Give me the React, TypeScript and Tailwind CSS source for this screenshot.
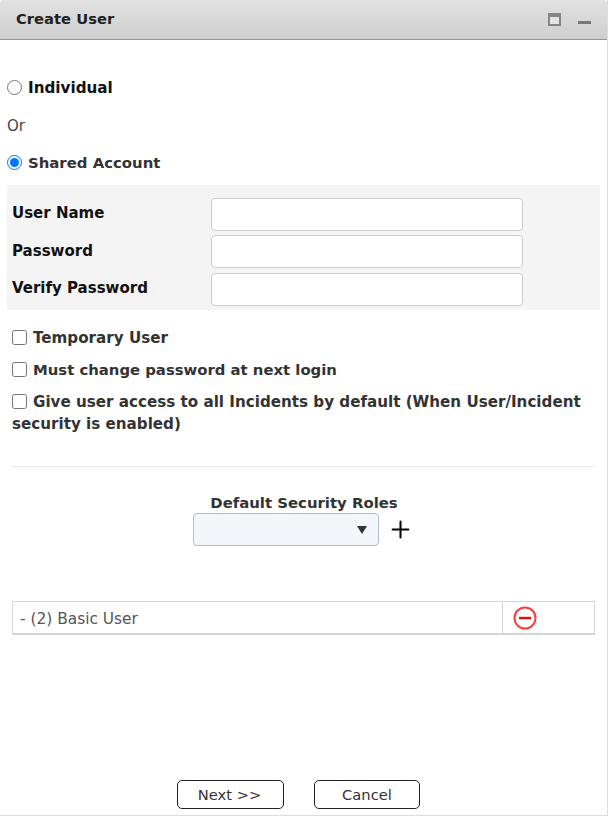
import { Plus } from "lucide-react";

const font = { fontFamily: '"DejaVu Sans", Verdana, sans-serif' };

function FieldRow({ label, className, labelClass }: { label: string; className: string; labelClass: string }) {
  return (
    <div className={`flex items-center h-[33px] ${className}`}>
      <label className={`w-[204px] pl-[5px] text-[15px] font-bold text-[#111] ${labelClass}`}>{label}</label>
      <input className="w-[312px] h-[33px] bg-white border border-[#ccc] rounded-[4px]" />
    </div>
  );
}

function CheckRow({ label, className }: { label: string; className: string }) {
  return (
    <div className={`pl-[12px] pr-[16px] leading-[22px] font-bold text-[#333] ${className}`}>
      <input type="checkbox" className="align-[-2px] mr-[6px] w-[15px] h-[15px]" />
      {label}
    </div>
  );
}

export default function App() {
  return (
    <div style={font} className="w-[608px] h-[816px] bg-white flex flex-col overflow-hidden border-r border-b border-[#ddd]">
      {/* Title bar */}
      <div className="h-[40px] shrink-0 flex items-center justify-between pl-[16px] pr-[16px] border-b border-[#8f979c] bg-gradient-to-b from-[#e2e2e2] to-[#cecece] rounded-t-[3px]">
        <span className="text-[14.75px] font-bold text-[#222]">Create User</span>
        <div className="flex items-center gap-[17px]">
          <div className="w-[13px] h-[13px] border-2 border-t-[4px] border-[#858585] bg-[#e4e4e4] -ml-px" />
          <div className="w-[13px] h-[3px] mt-[5px] bg-[#777]" />
        </div>
      </div>

      <div className="flex items-center h-[20px] mt-[37px] pl-[7px]">
        <input type="radio" name="type" className="w-[15px] h-[15px] m-0" />
        <span className="ml-[6px] pt-[2px] text-[15.2px] font-bold text-[#111]">Individual</span>
      </div>
      <div className="h-[20px] mt-[18px] pl-[7px] text-[15px] leading-[20px] text-[#444] pt-px">Or</div>
      <div className="flex items-center h-[20px] mt-[17px] pl-[7px]">
        <input type="radio" name="type" defaultChecked className="w-[15px] h-[15px] m-0" />
        <span className="ml-[6px] pt-[2px] text-[14.9px] font-bold text-[#333]">Shared Account</span>
      </div>

      {/* Credentials */}
      <div className="ml-[7px] w-[593px] h-[125px] mt-[13px] pt-[13px] bg-[#f4f4f4]">
        <FieldRow label="User Name" className="" labelClass="-mt-[3px]" />
        <FieldRow label="Password" className="mt-[4px]" labelClass="-mt-[1px]" />
        <FieldRow label="Verify Password" className="mt-[5px]" labelClass="-mt-[3px]" />
      </div>

      <CheckRow label="Temporary User" className="mt-[17px] text-[15.15px]" />
      <CheckRow label="Must change password at next login" className="mt-[10px] text-[14.85px]" />
      <CheckRow label="Give user access to all Incidents by default (When User/Incident security is enabled)" className="mt-[10px] text-[15.15px]" />

      <div className="mx-[12px] mt-[31px] h-px bg-[#e8e8e8] shrink-0" />

      {/* Roles */}
      <div className="mt-[26px] text-center text-[14.9px] leading-[20px] font-bold text-[#333] pl-[1px]">Default Security Roles</div>
      <div className="flex items-center pl-[193px]">
        <div className="w-[186px] h-[33px] flex items-center justify-end pr-[11px] bg-[#f2f6fb] border border-[#a9bdd4] rounded-[4px]">
          <svg width="10" height="8" viewBox="0 0 10 8">
            <path d="M0 0 L10 0 L5 8 Z" fill="#333" />
          </svg>
        </div>
        <Plus size={27} strokeWidth={1.8} className="ml-[8px] text-black" />
      </div>

      <div className="mx-[12px] w-[583px] mt-[55px] h-[34px] flex border border-[#d4d4d4] border-b-2 text-[15.4px] text-[#555]">
        <div className="w-[490px] flex items-center pl-[7px] pt-[5px] border-r border-[#d4d4d4]">- (2) Basic User</div>
        <div className="flex items-center pl-[10px]">
          <svg width="24" height="24" viewBox="0 0 24 24" fill="none">
            <circle cx="12" cy="12" r="10.5" stroke="#ff3a3a" strokeWidth="2" />
            <path d="M6 12 H18" stroke="#f00" strokeWidth="2.4" />
          </svg>
        </div>
      </div>

      <div className="mt-[145px] flex pl-[177px] gap-[30px] text-[14.7px] text-[#333]">
        <button className="w-[107px] h-[29px] pt-[2px] pr-[2px] bg-white border border-[#222] rounded-[5px]">Next &gt;&gt;</button>
        <button className="w-[106px] h-[29px] pt-[2px] bg-white border border-[#222] rounded-[5px]">Cancel</button>
      </div>
    </div>
  );
}
